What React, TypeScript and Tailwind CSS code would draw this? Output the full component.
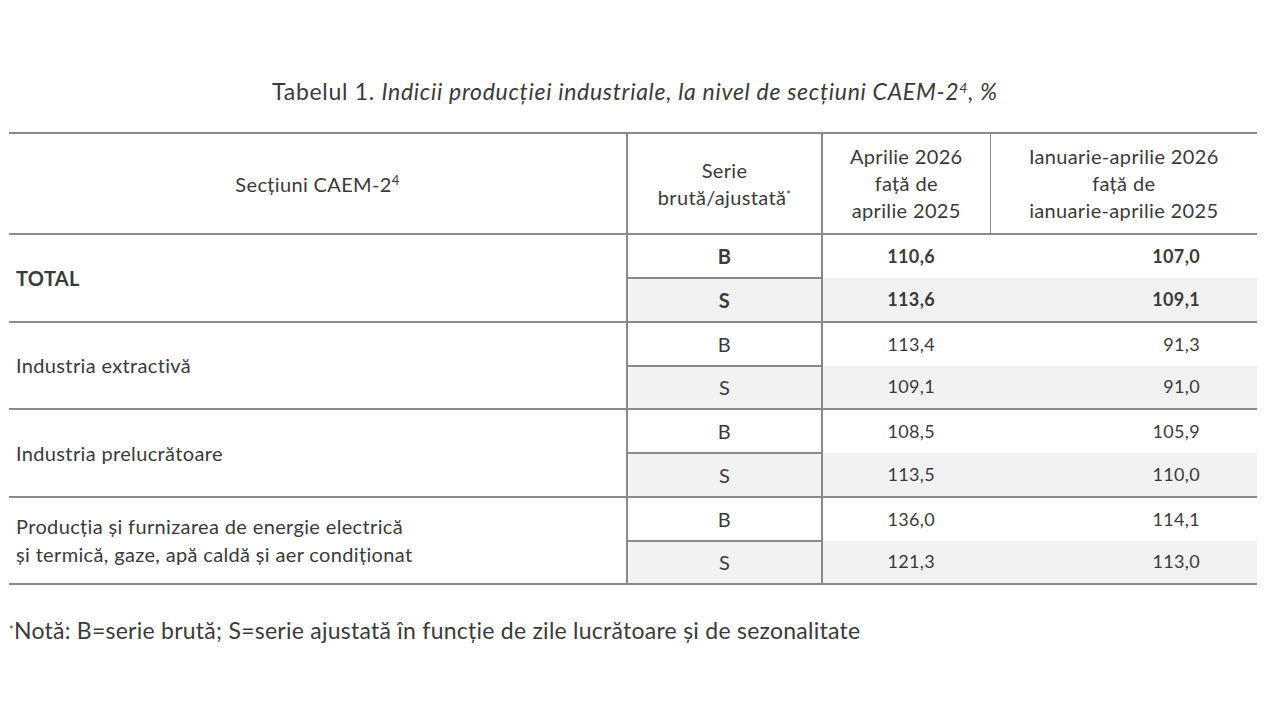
import React from 'react'

const rows = [
  { name: 'TOTAL', bold: true, b: ['110,6', '107,0'], s: ['113,6', '109,1'] },
  { name: 'Industria extractivă', b: ['113,4', '91,3'], s: ['109,1', '91,0'] },
  { name: 'Industria prelucrătoare', b: ['108,5', '105,9'], s: ['113,5', '110,0'] },
  {
    name: 'Producția și furnizarea de energie electrică\nși termică, gaze, apă caldă și aer condiționat',
    b: ['136,0', '114,1'],
    s: ['121,3', '113,0'],
  },
]

export default function App() {
  return (
    <div className="w-[1280px] h-[720px] bg-white text-[#3a3a3a] font-['Lato',sans-serif] pt-[76px]">
      <h1 className="text-center text-[23px] leading-[30px] tracking-[0.7px] pr-[10px]">
        Tabelul 1. <i>Indicii producției industriale, la nivel de secțiuni CAEM-2<sup className="text-[14px]">4</sup>, %</i>
      </h1>

      <table className="ml-[9px] mt-[26px] w-[1248px] border-collapse text-[20px] tracking-[0.35px]">
        <colgroup>
          <col className="w-[618px]" />
          <col className="w-[195px]" />
          <col className="w-[168px]" />
          <col className="w-[267px]" />
        </colgroup>
        <thead>
          <tr className="h-[101px] border-t-2 border-b-2 border-[#8a8a8a]">
            <th className="font-normal text-center">
              Secțiuni CAEM-2<sup className="text-[13px]">4</sup>
            </th>
            <th className="font-normal leading-[27px] border-l-2 border-[#8a8a8a]">
              Serie
              <br />
              brută/ajustată<sup className="text-[11px]">*</sup>
            </th>
            <th className="font-normal leading-[27px] border-l-2 border-[#8a8a8a]">
              Aprilie 2026
              <br />
              față de
              <br />
              aprilie 2025
            </th>
            <th className="font-normal leading-[27px] border-l border-[#8a8a8a]">
              Ianuarie-aprilie 2026
              <br />
              față de
              <br />
              ianuarie-aprilie 2025
            </th>
          </tr>
        </thead>
        <tbody>
          {rows.map((r) => (
            <React.Fragment key={r.name}>
              <tr className="h-[44px]">
                <td
                  rowSpan={2}
                  className={`pl-[7px] whitespace-pre-line leading-[28px] border-b-2 border-[#8a8a8a] ${
                    r.bold ? 'font-bold' : ''
                  }`}
                >
                  {r.name}
                </td>
                <td
                  className={`text-center border-l-2 border-b-2 border-[#8a8a8a] ${r.bold ? 'font-bold' : ''}`}
                >
                  B
                </td>
                <td
                  className={`text-right text-[18px] pr-[55px] border-l-2 border-[#8a8a8a] ${
                    r.bold ? 'font-bold' : ''
                  }`}
                >
                  {r.b[0]}
                </td>
                <td className={`text-right text-[18px] pr-[57px] ${r.bold ? 'font-bold' : ''}`}>{r.b[1]}</td>
              </tr>
              <tr className="h-[43.5px] bg-[#f2f2f2] border-b-2 border-[#8a8a8a]">
                <td className={`text-center border-l-2 border-[#8a8a8a] ${r.bold ? 'font-bold' : ''}`}>S</td>
                <td
                  className={`text-right text-[18px] pr-[55px] border-l-2 border-[#8a8a8a] ${
                    r.bold ? 'font-bold' : ''
                  }`}
                >
                  {r.s[0]}
                </td>
                <td className={`text-right text-[18px] pr-[57px] ${r.bold ? 'font-bold' : ''}`}>{r.s[1]}</td>
              </tr>
            </React.Fragment>
          ))}
        </tbody>
      </table>

      <p className="ml-[9px] mt-[28px] text-[23px] tracking-[0.25px]">
        <sup className="text-[11px]">*</sup>Notă: B=serie brută; S=serie ajustată în funcție de zile lucrătoare și de sezonalitate
      </p>
    </div>
  )
}
